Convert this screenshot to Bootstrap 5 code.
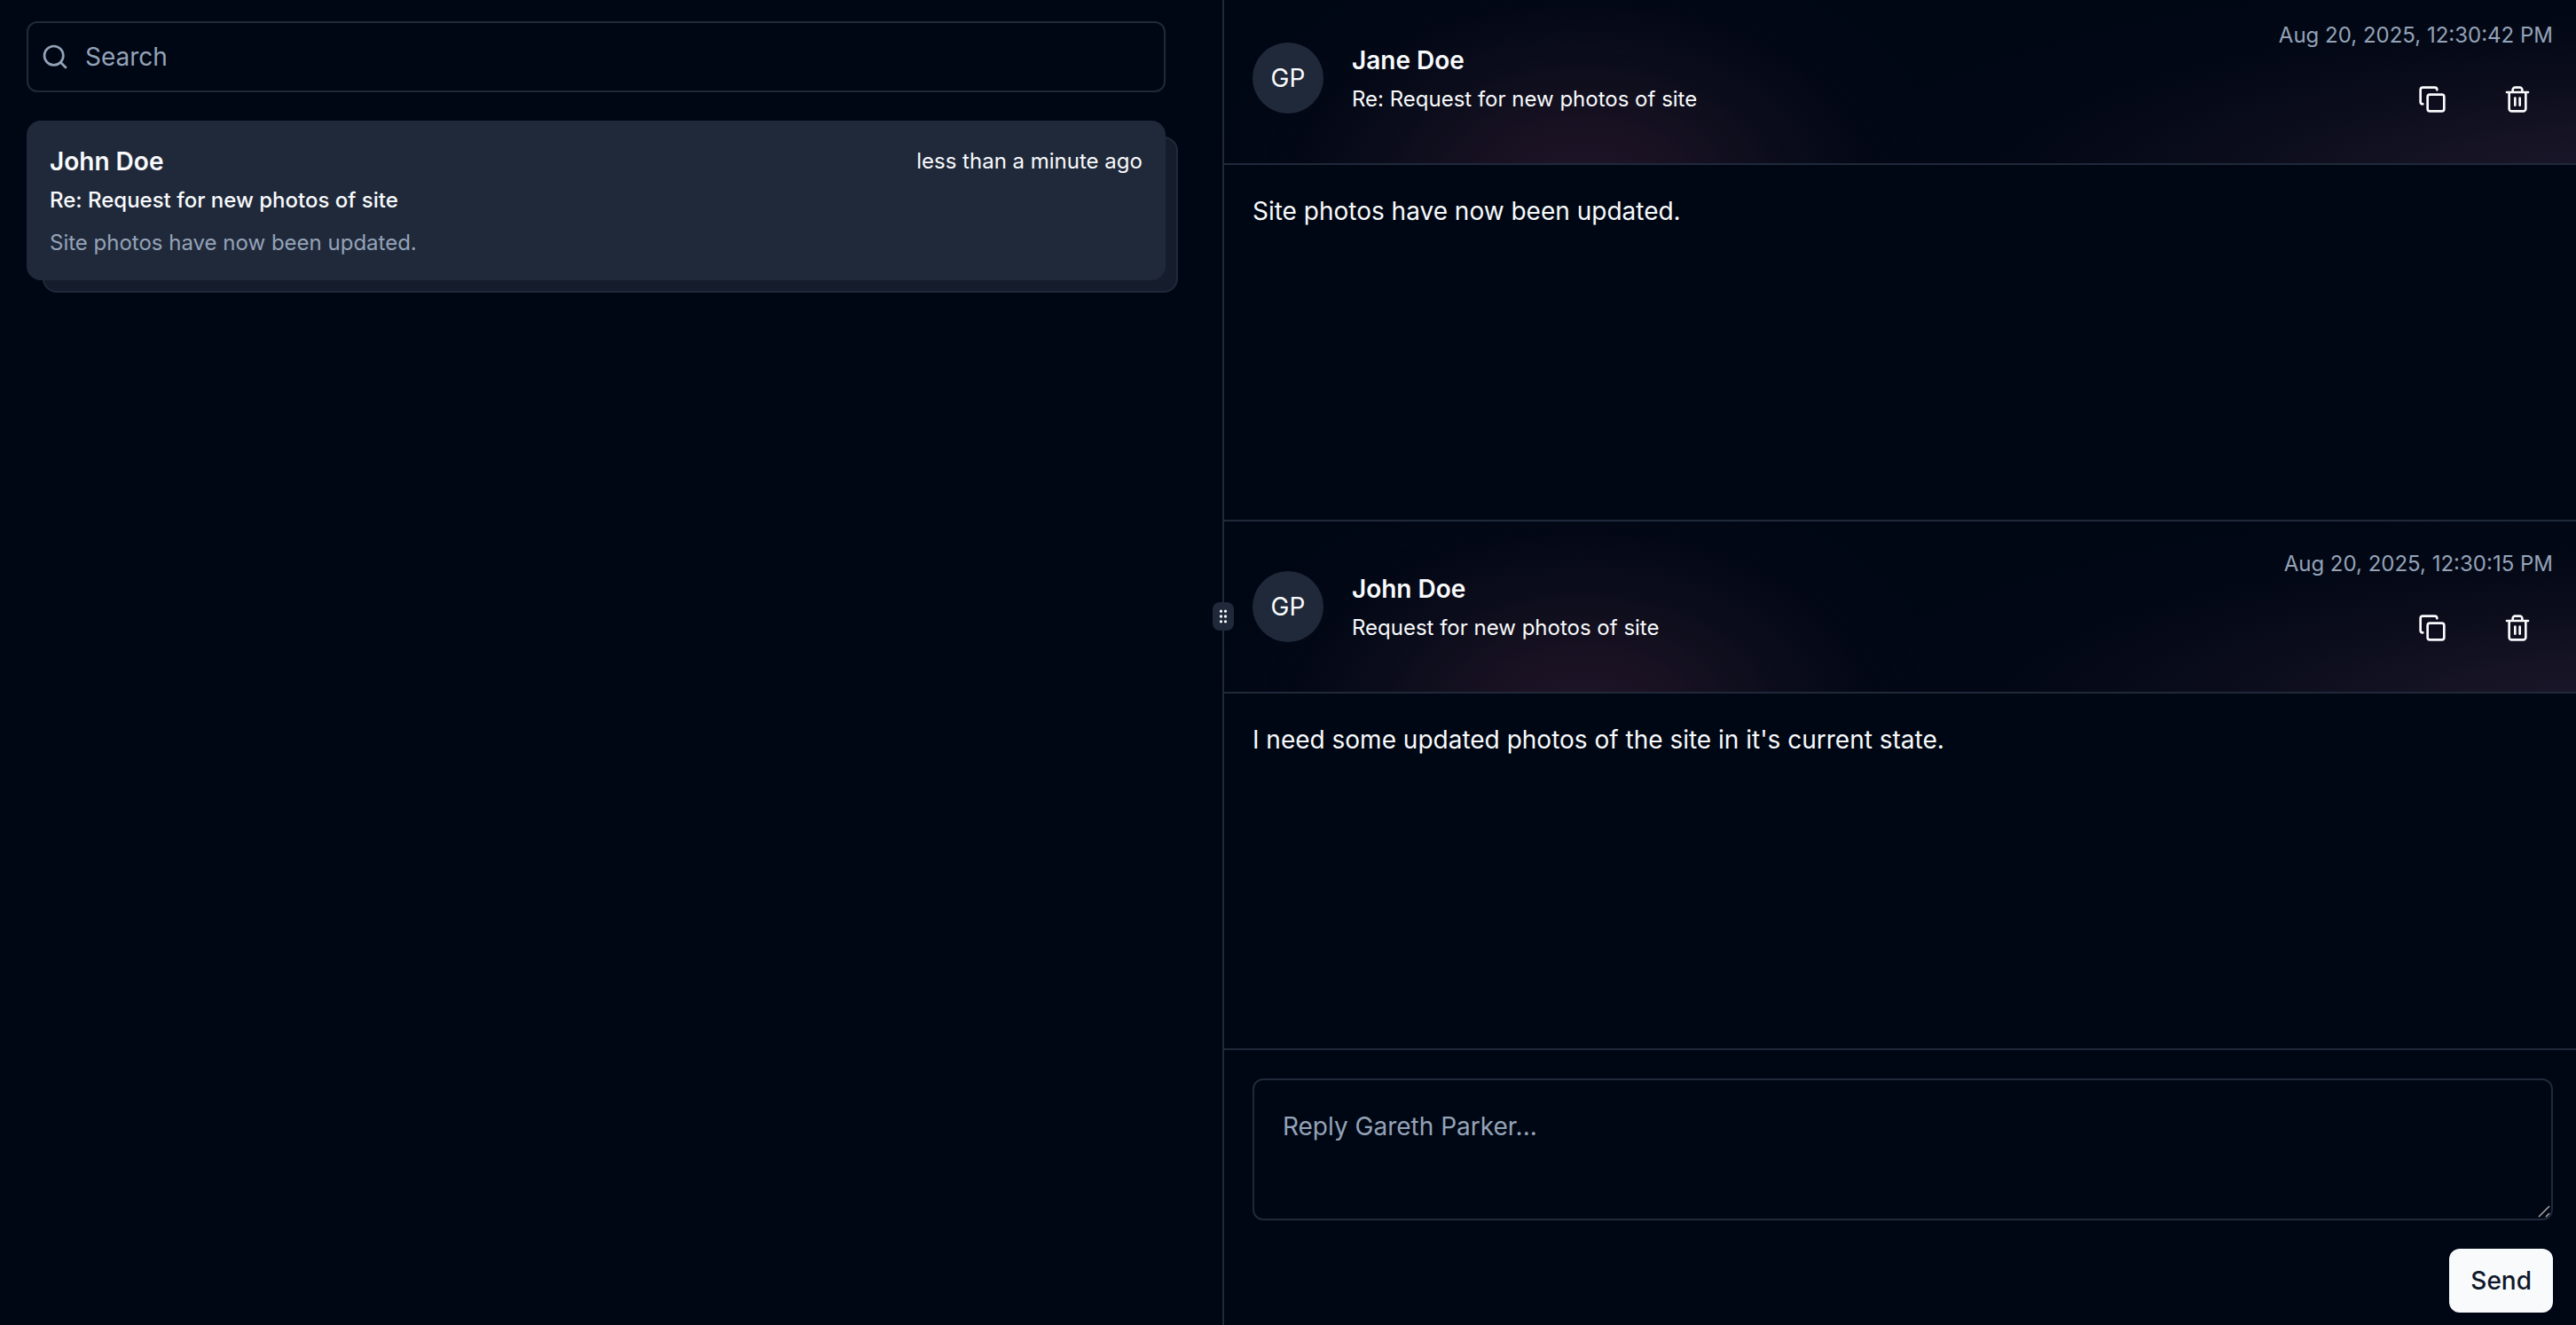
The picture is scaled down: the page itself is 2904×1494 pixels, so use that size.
<!DOCTYPE html>
<html lang="en" data-bs-theme="dark">
<head>
<meta charset="utf-8">
<meta name="viewport" content="width=device-width, initial-scale=1">
<title>Messages</title>
<link href="https://cdn.jsdelivr.net/npm/bootstrap@5.3.0/dist/css/bootstrap.min.css" rel="stylesheet">
<style>
:root { --ink: #f8fafc; --page: #000714; --panel: #20293a; --soft: #94a3b8; }
body { background: var(--page); color: var(--ink); font-family: Inter, "Liberation Sans", sans-serif; font-size: 28px; line-height: 40px; }
.text-sm24 { font-size: 24px; line-height: 32px; }
.text-soft { color: var(--soft); }
.icon { width: 32px; height: 32px; display: block; fill: none; stroke: currentColor; stroke-width: 2; stroke-linecap: round; stroke-linejoin: round; }

.threads { flex: 0 0 47.45%; padding: 24px 64px 24px 30px; gap: 32px; }
.field, .field:focus { background: transparent; border: 2px solid var(--panel); border-radius: 12px; color: var(--ink); font-size: 28px; line-height: 40px; }
.field::placeholder { color: var(--soft); opacity: 1; }
.search-field { height: 80px; padding: 0 16px 0 64px; }
.search-icon { left: 16px; color: var(--soft); }

.thread { z-index: 0; color: var(--ink); }
.thread::before { content: ""; position: absolute; z-index: -1; inset: 18px -14px -14px 18px; background: #151c2b; border: 2px solid var(--panel); border-radius: 16px; }
.thread-face { background: var(--panel); border-radius: 16px; padding: 26px; }

.splitter { flex: 0 0 2px; background: var(--panel); }
.grip { top: 46.5%; left: 50%; width: 24px; height: 32px; border-radius: 8px; background: var(--panel); color: var(--ink); }
.grip .icon { width: 20px; height: 20px; }

.msg-head { padding: 32px 26px 32px 32px; border-bottom: 2px solid var(--panel);
  background: radial-gradient(420px 270px at 26.5% 115%, #20142a 0%, #1a1223 22%, rgba(14, 14, 29, .85) 52%, rgba(5, 8, 22, .5) 80%, transparent 100%),
              radial-gradient(950px 250px at 106% 118%, #1e1930 0%, #171426 25%, rgba(13, 14, 29, .85) 52%, rgba(5, 8, 22, .5) 80%, transparent 100%); }
.face { width: 80px; height: 80px; background: var(--panel); }
.tool { width: 80px; height: 80px; color: var(--ink); }
.msg-body { min-height: 402px; padding: 32px; border-bottom: 2px solid var(--panel); }
.composer { padding: 32px 26px 14px 32px; gap: 32px; }
.reply-field { height: 160px; padding: 32px; }
.reply-field::-webkit-resizer { display: none; }
.corner { right: 2px; bottom: 2px; width: 20px; height: 20px; pointer-events: none; }
.send, .send:hover { height: 72px; padding: 0 24px; border-radius: 12px; background: var(--ink); color: #0f172a; font-size: 28px; line-height: 40px; }
</style>
<script src="https://cdn.jsdelivr.net/npm/bootstrap@5.3.0/dist/js/bootstrap.bundle.min.js" defer></script>
</head>
<body>
<svg class="d-none" aria-hidden="true">
  <symbol id="i-copy" viewBox="0 0 24 24"><rect x="8" y="8" width="14" height="14" rx="2"/><path d="M4 16c-1.1 0-2-.9-2-2V4c0-1.1.9-2 2-2h10c1.1 0 2 .9 2 2"/></symbol>
  <symbol id="i-trash" viewBox="0 0 24 24"><path d="M3 6h18M19 6v14c0 1-1 2-2 2H7c-1 0-2-1-2-2V6M8 6V4c0-1 1-2 2-2h4c1 0 2 1 2 2v2M10 11v6M14 11v6"/></symbol>
</svg>
<div class="d-flex vh-100 overflow-hidden">
  <aside class="threads d-flex flex-column">
    <form class="position-relative d-flex align-items-center" role="search">
      <label for="search" class="search-icon position-absolute">
        <svg class="icon" viewBox="0 0 24 24" aria-hidden="true"><circle cx="11" cy="11" r="8"/><path d="m21 21-4.3-4.3"/></svg>
      </label>
      <input id="search" type="search" class="form-control field search-field shadow-none" placeholder="Search" aria-label="Search">
    </form>
    <a href="#thread" class="thread d-block position-relative text-decoration-none">
      <div class="thread-face d-flex flex-column">
        <div class="d-flex justify-content-between align-items-center">
          <span class="fw-semibold">John Doe</span>
          <span class="text-sm24">less than a minute ago</span>
        </div>
        <div class="text-sm24 fw-medium mt-2">Re: Request for new photos of site</div>
        <div class="text-sm24 text-soft mt-3">Site photos have now been updated.</div>
      </div>
    </a>
  </aside>

  <div class="splitter position-relative">
    <div class="grip position-absolute translate-middle d-flex align-items-center justify-content-center" role="separator" aria-orientation="vertical" aria-label="Resize panels">
      <svg class="icon" viewBox="0 0 24 24"><circle cx="9" cy="12" r="1"/><circle cx="9" cy="5" r="1"/><circle cx="9" cy="19" r="1"/><circle cx="15" cy="12" r="1"/><circle cx="15" cy="5" r="1"/><circle cx="15" cy="19" r="1"/></svg>
    </div>
  </div>

  <main id="thread" class="flex-fill d-flex flex-column justify-content-end">
    <article>
      <header class="msg-head d-flex align-items-center">
        <div class="face rounded-circle d-flex align-items-center justify-content-center flex-shrink-0">GP</div>
        <div class="flex-fill d-flex flex-column gap-2 ms-4 ps-2">
          <span class="fw-semibold">Jane Doe</span>
          <span class="text-sm24">Re: Request for new photos of site</span>
        </div>
        <div class="d-flex flex-column align-items-end gap-3">
          <time class="text-sm24 text-soft">Aug 20, 2025, 12:30:42 PM</time>
          <div class="d-flex gap-3">
            <button type="button" class="btn border-0 p-0 tool d-flex align-items-center justify-content-center" aria-label="Copy"><svg class="icon"><use href="#i-copy"/></svg></button>
            <button type="button" class="btn border-0 p-0 tool d-flex align-items-center justify-content-center" aria-label="Delete"><svg class="icon"><use href="#i-trash"/></svg></button>
          </div>
        </div>
      </header>
      <div class="msg-body">Site photos have now been updated.</div>
    </article>
    <article>
      <header class="msg-head d-flex align-items-center">
        <div class="face rounded-circle d-flex align-items-center justify-content-center flex-shrink-0">GP</div>
        <div class="flex-fill d-flex flex-column gap-2 ms-4 ps-2">
          <span class="fw-semibold">John Doe</span>
          <span class="text-sm24">Request for new photos of site</span>
        </div>
        <div class="d-flex flex-column align-items-end gap-3">
          <time class="text-sm24 text-soft">Aug 20, 2025, 12:30:15 PM</time>
          <div class="d-flex gap-3">
            <button type="button" class="btn border-0 p-0 tool d-flex align-items-center justify-content-center" aria-label="Copy"><svg class="icon"><use href="#i-copy"/></svg></button>
            <button type="button" class="btn border-0 p-0 tool d-flex align-items-center justify-content-center" aria-label="Delete"><svg class="icon"><use href="#i-trash"/></svg></button>
          </div>
        </div>
      </header>
      <div class="msg-body">I need some updated photos of the site in it's current state.</div>
    </article>
    <form class="composer d-flex flex-column align-items-end">
      <div class="position-relative w-100">
        <textarea id="reply" class="form-control field reply-field shadow-none d-block" placeholder="Reply Gareth Parker..." aria-label="Reply"></textarea>
        <svg class="corner position-absolute" viewBox="0 0 20 20" fill="none" stroke="#a8a8a8" stroke-width="1.5" aria-hidden="true"><path d="M6 18 18 6M14 18l4-4"/></svg>
      </div>
      <button type="submit" class="btn border-0 send fw-medium">Send</button>
    </form>
  </main>
</div>
</body>
</html>
